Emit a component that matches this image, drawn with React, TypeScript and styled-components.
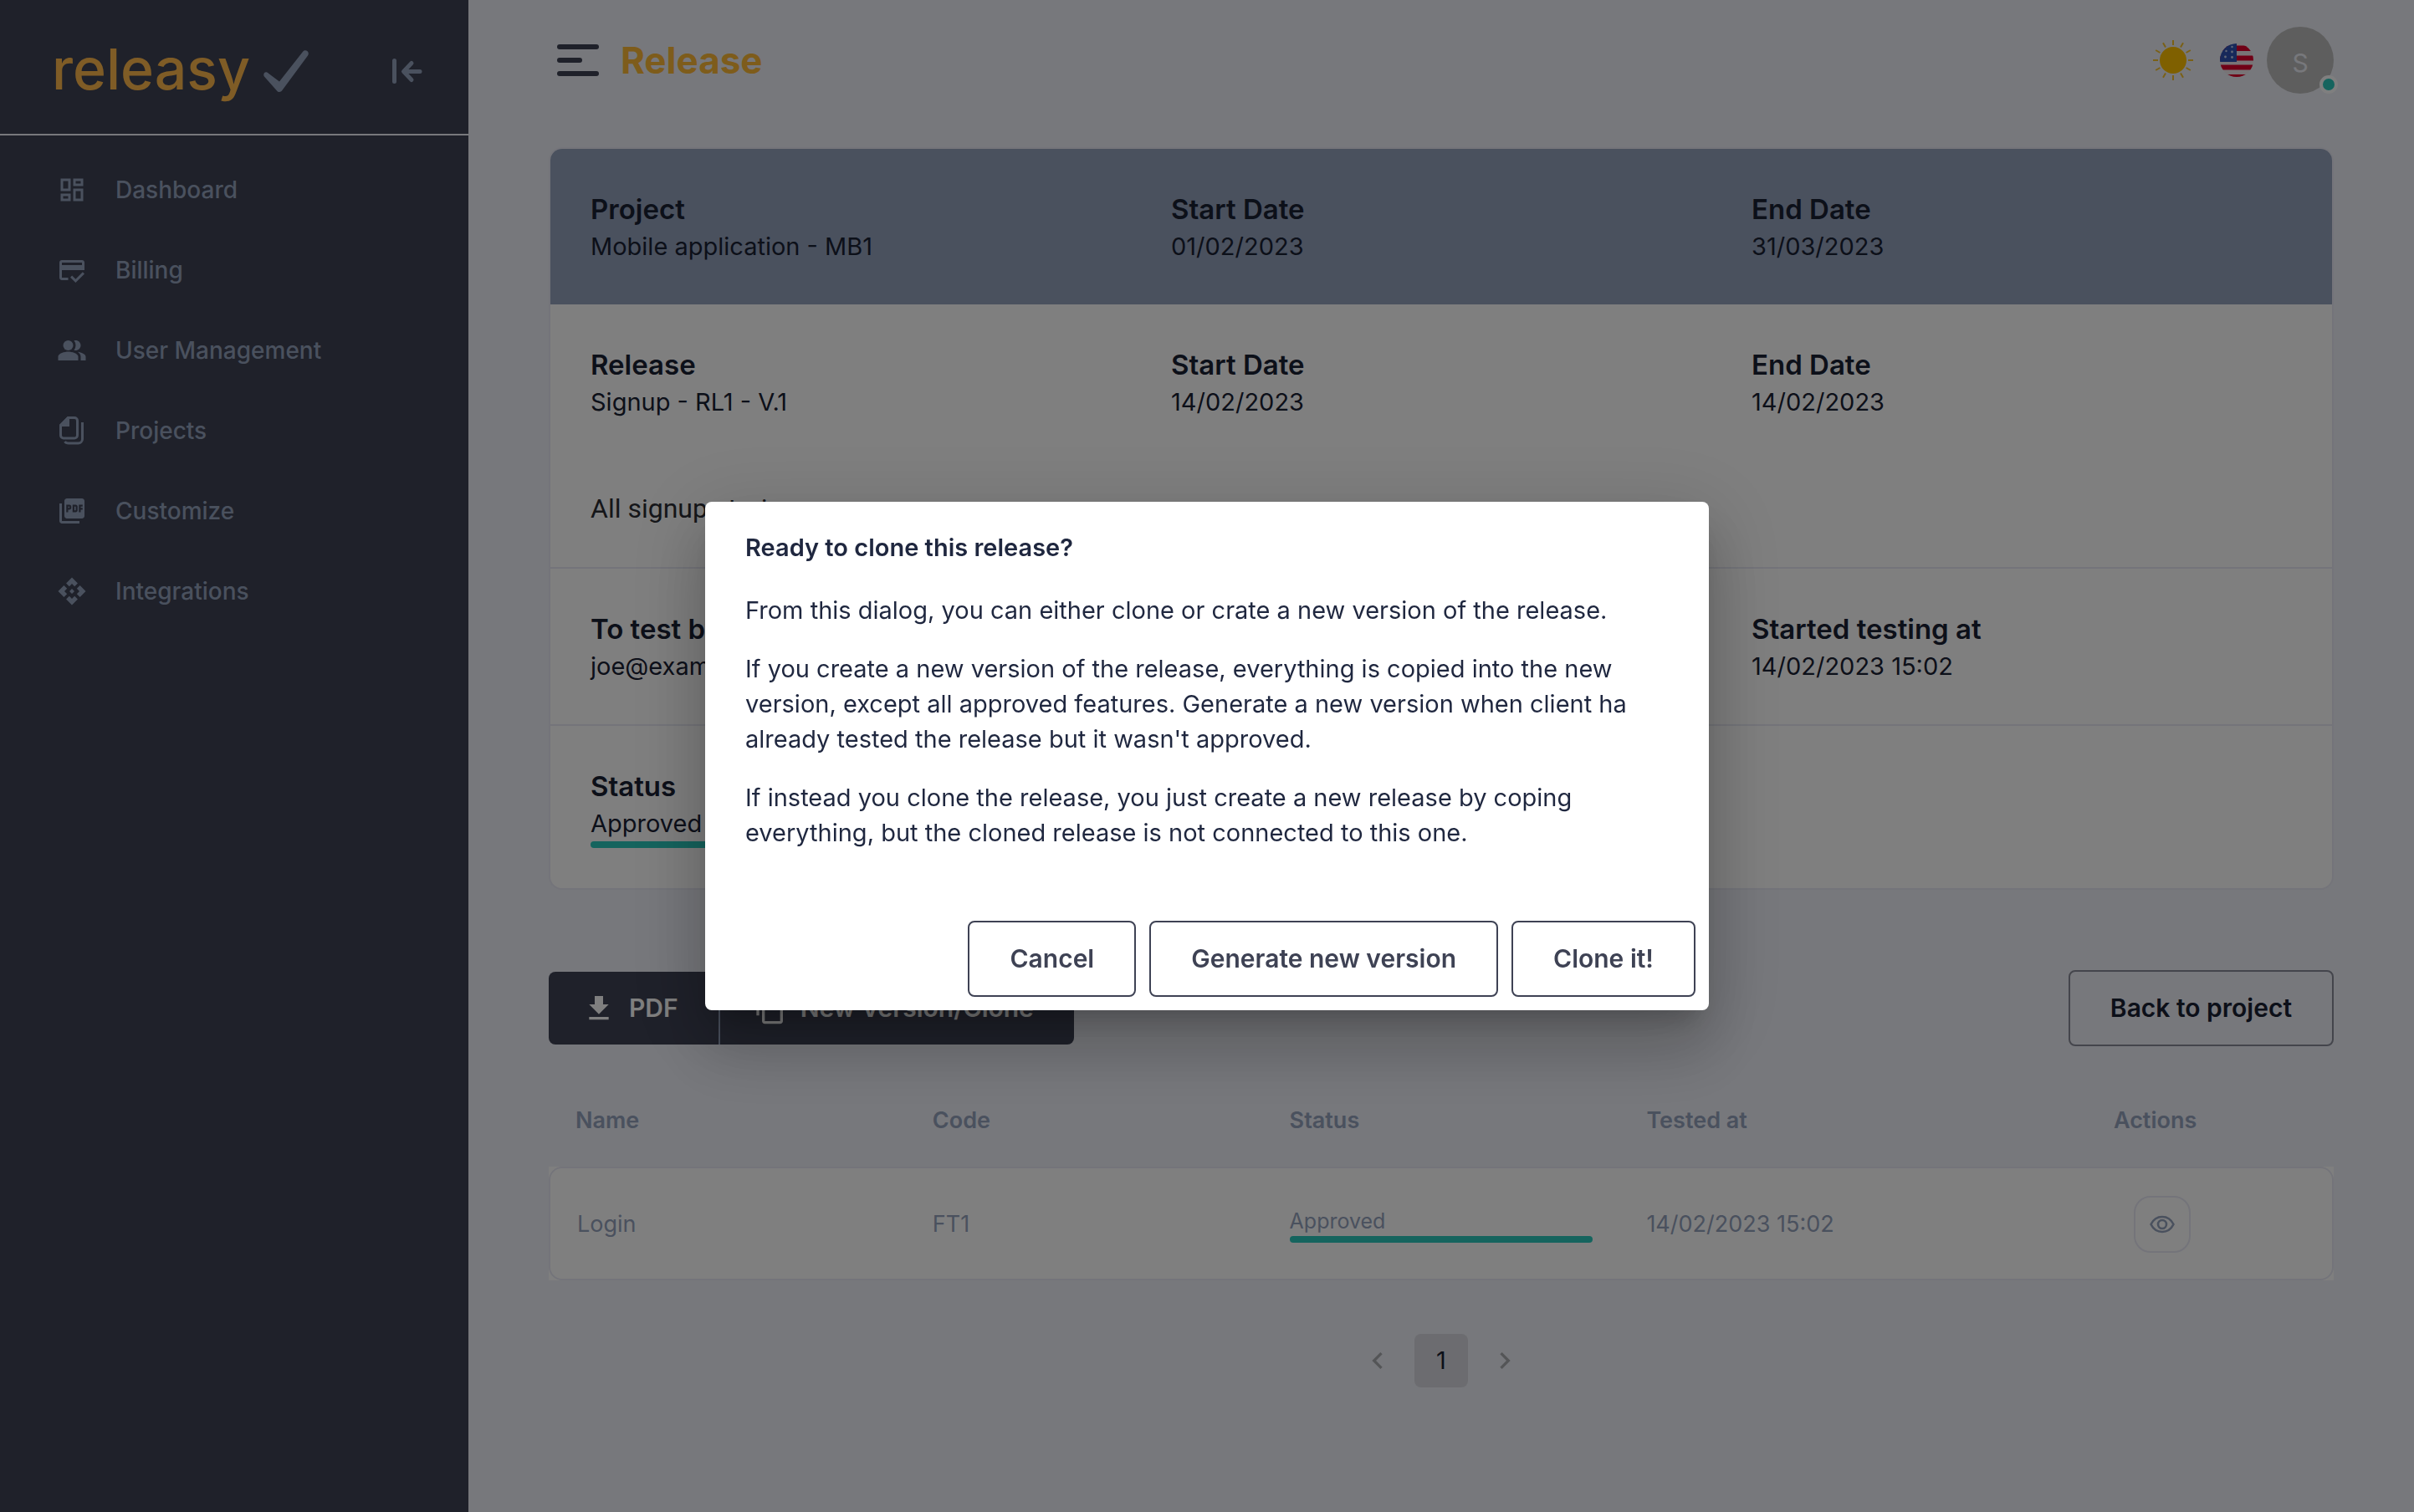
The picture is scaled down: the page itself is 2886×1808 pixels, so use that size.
import React from 'react';
import styled, { createGlobalStyle } from 'styled-components';
import {
  MdOutlineDashboard,
  MdCreditScore,
  MdPeopleAlt,
  MdPictureAsPdf,
  MdApi,
  MdFileDownload,
  MdContentCopy,
  MdNavigateBefore,
  MdNavigateNext,
} from 'react-icons/md';

const color = {
  navy: '#3e4254',
  slate: '#94a2bd',
  ink: '#192033',
  dialogInk: '#1f273f',
  page: '#eef0f8',
  line: '#e8e9f4',
  gold: '#fcb936',
  logo: '#ffb84c',
  teal: '#2ac8bc',
};

const GlobalStyle = createGlobalStyle`
  *, *::before, *::after { box-sizing: border-box; }
  body {
    margin: 0;
    background: ${color.page};
    color: ${color.ink};
    font-family: Inter, "Open Sans", sans-serif;
    font-size: 29px;
    line-height: 42px;
  }
  h1, h2, h3, p, ul, dl, dd { margin: 0; padding: 0; }
  button { font: inherit; color: inherit; background: none; border: 0; padding: 0; cursor: pointer; }
  a { color: inherit; text-decoration: none; }
  svg { display: block; flex: none; }
`;

const Shell = styled.div`
  display: flex;
  min-height: 100vh;
`;

const Sidebar = styled.aside`
  flex: 0 0 560px;
  background: ${color.navy};
  color: ${color.slate};
`;

const Brand = styled.div`
  display: flex;
  align-items: center;
  height: 162px;
  padding: 10px 55px 0 62px;
  border-bottom: 2px solid ${color.page};
`;

const BrandLink = styled.a`
  display: flex;
  align-items: center;
  gap: 16px;
`;

const BrandName = styled.span`
  padding-bottom: 6px;
  color: ${color.logo};
  font-size: 68px;
  font-weight: 500;
  line-height: 72px;
`;

const CollapseButton = styled.button`
  margin-left: auto;
`;

const NavList = styled.ul`
  list-style: none;
  padding: 17px 0;
`;

const NavLink = styled.a`
  display: flex;
  align-items: center;
  gap: 34px;
  height: 96px;
  padding-left: 68px;
  font-size: 28px;
  font-weight: 500;
`;

const NavIcon = styled.span`
  display: grid;
  place-items: center;
  width: 36px;
  height: 36px;
`;

const Main = styled.main`
  flex: 1;
  min-width: 0;
  padding: 0 96px 64px;
`;

const TopBar = styled.header`
  display: flex;
  align-items: center;
  height: 144px;
  padding-left: 10px;
  margin-bottom: 32px;
`;

const MenuButton = styled.button`
  display: grid;
  gap: 10px;
  width: 50px;
`;

const MenuLine = styled.span<{ $short?: boolean }>`
  width: ${(p) => (p.$short ? '30px' : '50px')};
  height: 6px;
  border-radius: 3px;
  background: ${color.navy};
`;

const PageTitle = styled.h1`
  margin-left: 26px;
  color: ${color.gold};
  font-size: 44px;
  font-weight: 700;
  line-height: 56px;
`;

const Tools = styled.div`
  display: flex;
  align-items: center;
  margin-left: auto;
`;

const LanguageButton = styled.button`
  margin: 0 16px 0 32px;
`;

const Avatar = styled.button`
  position: relative;
  width: 80px;
  height: 80px;
  border-radius: 50%;
  background: #bdbdbd;
  color: ${color.page};
  font-size: 30px;
  line-height: 86px;
`;

const OnlineDot = styled.span`
  position: absolute;
  right: -5px;
  bottom: 0;
  width: 22px;
  height: 22px;
  border: 4px solid #fff;
  border-radius: 50%;
  background: ${color.teal};
`;

const Card = styled.section`
  overflow: hidden;
  border: 2px solid ${color.line};
  border-radius: 16px;
  background: #fff;
`;

const CardSection = styled.div<{ $tinted?: boolean; $divided?: boolean }>`
  padding: 48px 0 48px 48px;
  background: ${(p) => (p.$tinted ? color.slate : 'transparent')};
  border-top: ${(p) => (p.$divided ? `2px solid ${color.line}` : '0')};
`;

const Facts = styled.dl`
  display: grid;
  grid-template-columns: repeat(3, 1fr);
`;

const FactLabel = styled.dt`
  font-size: 33px;
  font-weight: 600;
  line-height: 48px;
`;

const FactColumn = styled.div<{ $column?: number }>`
  grid-column: ${(p) => p.$column ?? 'auto'};
`;

const Description = styled.p`
  margin-top: 84px;
  font-family: Roboto, Inter, sans-serif;
  font-size: 32px;
  line-height: 44px;
  color: #2b2d33;
`;

const StatusBar = styled.div<{ $full?: boolean }>`
  width: ${(p) => (p.$full ? '100%' : '85%')};
  height: 8px;
  border-radius: 4px;
  background: ${color.teal};
`;

const ActionRow = styled.div`
  display: flex;
  align-items: center;
  justify-content: space-between;
  margin-top: 96px;
`;

const ButtonGroup = styled.div`
  display: flex;
  overflow: hidden;
  border-radius: 8px;
  background: ${color.navy};
`;

const GroupButton = styled.button`
  display: flex;
  align-items: center;
  gap: 16px;
  padding: 19px 48px 19px 40px;
  color: #fff;
  font-size: 30px;
  font-weight: 600;
  line-height: 49px;

  & + & {
    border-left: 2px solid ${color.slate};
  }
`;

const OutlineButton = styled.button<{ $muted?: boolean }>`
  padding: 19px 48px;
  border: 2px solid ${(p) => (p.$muted ? '#888b98' : color.navy)};
  border-radius: 8px;
  color: ${(p) => (p.$muted ? color.ink : color.navy)};
  font-size: 30px;
  font-weight: 600;
  line-height: 49px;
`;

const FeatureTable = styled.table`
  width: 100%;
  margin-top: 34px;
  border-spacing: 0;
  table-layout: fixed;
  color: ${color.slate};
  font-size: 27px;
`;

const HeadCell = styled.th<{ $center?: boolean }>`
  height: 110px;
  padding: 0 32px;
  text-align: ${(p) => (p.$center ? 'center' : 'left')};
  font-weight: 600;
`;

const BodyRow = styled.tr`
  background: #fff;
  outline: 2px solid ${color.line};
  outline-offset: -2px;
  border-radius: 16px;
`;

const Cell = styled.td`
  height: 136px;
  padding: 2px 32px 0;

  &:first-child {
    padding-left: 34px;
  }
`;

const CellStatus = styled.div`
  font-size: 25px;
  line-height: 36px;
`;

const ViewButton = styled.button`
  display: grid;
  place-items: center;
  width: 68px;
  height: 68px;
  margin: 0 auto;
  border: 2px solid ${color.line};
  border-radius: 20px;
`;

const ActionSlot = styled.div`
  padding-left: 16px;
`;

const Pager = styled.nav`
  display: flex;
  justify-content: center;
  gap: 12px;
  margin-top: 64px;
`;

const PagerButton = styled.button<{ $current?: boolean }>`
  display: grid;
  place-items: center;
  width: 64px;
  height: 64px;
  border-radius: 8px;
  background: ${(p) => (p.$current ? '#d8d9e0' : 'transparent')};
  color: ${(p) => (p.$current ? color.ink : '#a9aaae')};
`;

const Backdrop = styled.div`
  position: fixed;
  inset: 0;
  display: grid;
  place-items: center;
  background: rgba(0, 0, 0, 0.5);
`;

const Dialog = styled.div`
  width: 1200px;
  max-width: calc(100vw - 128px);
  border-radius: 8px;
  background: #fff;
  color: ${color.dialogInk};
  box-shadow:
    0 22px 30px -14px rgba(0, 0, 0, 0.2),
    0 48px 76px 6px rgba(0, 0, 0, 0.14),
    0 18px 92px 16px rgba(0, 0, 0, 0.12);
`;

const DialogTitle = styled.h2`
  padding: 32px 48px;
  font-size: 29px;
  font-weight: 600;
  line-height: 45px;
`;

const DialogBody = styled.div`
  padding: 0 48px 40px;

  p {
    margin-bottom: 28px;
  }
`;

const DialogActions = styled.div`
  display: flex;
  justify-content: flex-end;
  gap: 16px;
  padding: 16px;
`;

function CheckMark() {
  return (
    <svg width="54" height="50" viewBox="0 0 54 50" aria-hidden="true">
      <path
        d="M.9 31.5C-.6 29.300 .6 26.300 3 26.300c1.200 0 2 .5 3 1.500l13 9.700L47.300 1.600C49.500-1 53.800.8 53.800 4c0 1-.3 1.700-.8 2.500L22.200 48.200c-1.600 2.200-4.500 2.300-6.200.2z"
        fill={color.slate}
      />
    </svg>
  );
}

function CollapseIcon() {
  return (
    <svg width="36" height="30" viewBox="0 0 36 30" fill="none" stroke={color.slate} strokeWidth="5" strokeLinecap="round" strokeLinejoin="round">
      <path d="M2.500 2.500v25M33 15.500H14M23 5.500l-9.500 10 9.500 10" />
    </svg>
  );
}

function PagesIcon() {
  return (
    <svg width="30" height="34" viewBox="0 0 30 34" fill="none" stroke="currentColor" strokeWidth="3">
      <path d="M10.500 1.500H18a3.500 3.500 0 0 1 3.500 3.500v17.500A3.500 3.500 0 0 1 18 26H5a3.500 3.500 0 0 1-3.500-3.500V10.500z" />
      <path d="M10.500 1.500v9h-9z" fill="currentColor" />
      <path d="M27.500 7v20a5 5 0 0 1-5 5H11c-2 0-3.600-.6-4.500-2" />
    </svg>
  );
}

function SunIcon() {
  const rays = Array.from({ length: 12 }, (_, i) => i * 30);
  return (
    <svg width="48" height="48" viewBox="0 0 48 48" aria-hidden="true">
      <circle cx="24" cy="24" r="16" fill="#ffc000" />
      {rays.map((angle) => (
        <path key={angle} d="M24 0v6" stroke="#f5c02c" strokeWidth="2" transform={`rotate(${angle} 24 24)`} />
      ))}
    </svg>
  );
}

function FlagIcon() {
  return (
    <svg width="40" height="40" viewBox="0 0 40 40" aria-hidden="true">
      <clipPath id="flag-disc">
        <circle cx="20" cy="20" r="20" />
      </clipPath>
      <g clipPath="url(#flag-disc)">
        <path fill="#f0e8ec" d="M0 0h40v40H0z" />
        <path fill="#e0002c" d="M0 2.500h40v6.500H0zM0 14.500h40v6H0zM0 25.500h40v6H0zM0 37h40v3H0z" />
        <path fill="#2f52b4" d="M0 0h20v22H0z" />
        <g fill="#c3cfee">
          <circle cx="14.500" cy="4" r="1.200" />
          <circle cx="14.500" cy="10" r="1.400" />
          <circle cx="14.500" cy="16.500" r="1.400" />
          <circle cx="7.500" cy="9" r="1.200" />
          <circle cx="6.500" cy="16" r="1.400" />
        </g>
      </g>
    </svg>
  );
}

function EyeIcon() {
  return (
    <svg width="30" height="22" viewBox="0 0 30 22" fill="none" stroke={color.slate} strokeWidth="2.600" strokeLinejoin="round">
      <path d="M1.500 11C4.500 5 9.300 2 15 2s10.500 3 13.500 9c-3 6-7.800 9-13.500 9S4.500 17 1.500 11z" />
      <circle cx="15" cy="11" r="5" />
    </svg>
  );
}

const navItems = [
  { label: 'Dashboard', icon: <MdOutlineDashboard size={36} /> },
  { label: 'Billing', icon: <MdCreditScore size={36} /> },
  { label: 'User Management', icon: <MdPeopleAlt size={36} /> },
  { label: 'Projects', icon: <PagesIcon /> },
  { label: 'Customize', icon: <MdPictureAsPdf size={36} /> },
  { label: 'Integrations', icon: <MdApi size={36} /> },
];

function Fact({ label, column, children }: { label: string; column?: number; children: React.ReactNode }) {
  return (
    <FactColumn $column={column}>
      <FactLabel>{label}</FactLabel>
      <dd>{children}</dd>
    </FactColumn>
  );
}

export default function App() {
  return (
    <>
      <GlobalStyle />
      <Shell>
        <Sidebar>
          <Brand>
            <BrandLink href="#">
              <BrandName>releasy</BrandName>
              <CheckMark />
            </BrandLink>
            <CollapseButton aria-label="Collapse sidebar">
              <CollapseIcon />
            </CollapseButton>
          </Brand>
          <nav>
            <NavList>
              {navItems.map((item) => (
                <li key={item.label}>
                  <NavLink href="#">
                    <NavIcon>{item.icon}</NavIcon>
                    {item.label}
                  </NavLink>
                </li>
              ))}
            </NavList>
          </nav>
        </Sidebar>

        <Main>
          <TopBar>
            <MenuButton aria-label="Menu">
              <MenuLine />
              <MenuLine $short />
              <MenuLine />
            </MenuButton>
            <PageTitle>Release</PageTitle>
            <Tools>
              <button aria-label="Light theme">
                <SunIcon />
              </button>
              <LanguageButton aria-label="Language">
                <FlagIcon />
              </LanguageButton>
              <Avatar aria-label="Account">
                S
                <OnlineDot />
              </Avatar>
            </Tools>
          </TopBar>

          <Card>
            <CardSection $tinted>
              <Facts>
                <Fact label="Project">Mobile application - MB1</Fact>
                <Fact label="Start Date">01/02/2023</Fact>
                <Fact label="End Date">31/03/2023</Fact>
              </Facts>
            </CardSection>
            <CardSection>
              <Facts>
                <Fact label="Release">Signup - RL1 - V.1</Fact>
                <Fact label="Start Date">14/02/2023</Fact>
                <Fact label="End Date">14/02/2023</Fact>
              </Facts>
              <Description>All signup stories</Description>
            </CardSection>
            <CardSection $divided>
              <Facts>
                <Fact label="To test by">joe@example.com</Fact>
                <Fact label="Started testing at" column={3}>14/02/2023 15:02</Fact>
              </Facts>
            </CardSection>
            <CardSection $divided>
              <Facts>
                <Fact label="Status">
                  Approved
                  <StatusBar />
                </Fact>
              </Facts>
            </CardSection>
          </Card>

          <ActionRow>
            <ButtonGroup>
              <GroupButton>
                <MdFileDownload size={40} />
                PDF
              </GroupButton>
              <GroupButton>
                <MdContentCopy size={40} />
                New Version/Clone
              </GroupButton>
            </ButtonGroup>
            <OutlineButton $muted>Back to project</OutlineButton>
          </ActionRow>

          <FeatureTable>
            <thead>
              <tr>
                <HeadCell>Name</HeadCell>
                <HeadCell>Code</HeadCell>
                <HeadCell>Status</HeadCell>
                <HeadCell>Tested at</HeadCell>
                <HeadCell $center>Actions</HeadCell>
              </tr>
            </thead>
            <tbody>
              <BodyRow>
                <Cell>Login</Cell>
                <Cell>FT1</Cell>
                <Cell>
                  <CellStatus>Approved</CellStatus>
                  <StatusBar $full />
                </Cell>
                <Cell>14/02/2023 15:02</Cell>
                <Cell>
                  <ActionSlot>
                    <ViewButton aria-label="View feature">
                      <EyeIcon />
                    </ViewButton>
                  </ActionSlot>
                </Cell>
              </BodyRow>
            </tbody>
          </FeatureTable>

          <Pager aria-label="Pagination">
            <PagerButton aria-label="Previous page">
              <MdNavigateBefore size={40} />
            </PagerButton>
            <PagerButton $current>1</PagerButton>
            <PagerButton aria-label="Next page">
              <MdNavigateNext size={40} />
            </PagerButton>
          </Pager>
        </Main>
      </Shell>

      <Backdrop>
        <Dialog role="dialog" aria-modal="true" aria-labelledby="clone-title">
          <DialogTitle id="clone-title">Ready to clone this release?</DialogTitle>
          <DialogBody>
            <p>From this dialog, you can either clone or crate a new version of the release.</p>
            <p>
              If you create a new version of the release, everything is copied into the new version, except all
              approved features. Generate a new version when client ha already tested the release but it wasn't
              approved.
            </p>
            <p>
              If instead you clone the release, you just create a new release by coping everything, but the cloned
              release is not connected to this one.
            </p>
          </DialogBody>
          <DialogActions>
            <OutlineButton>Cancel</OutlineButton>
            <OutlineButton>Generate new version</OutlineButton>
            <OutlineButton>Clone it!</OutlineButton>
          </DialogActions>
        </Dialog>
      </Backdrop>
    </>
  );
}
